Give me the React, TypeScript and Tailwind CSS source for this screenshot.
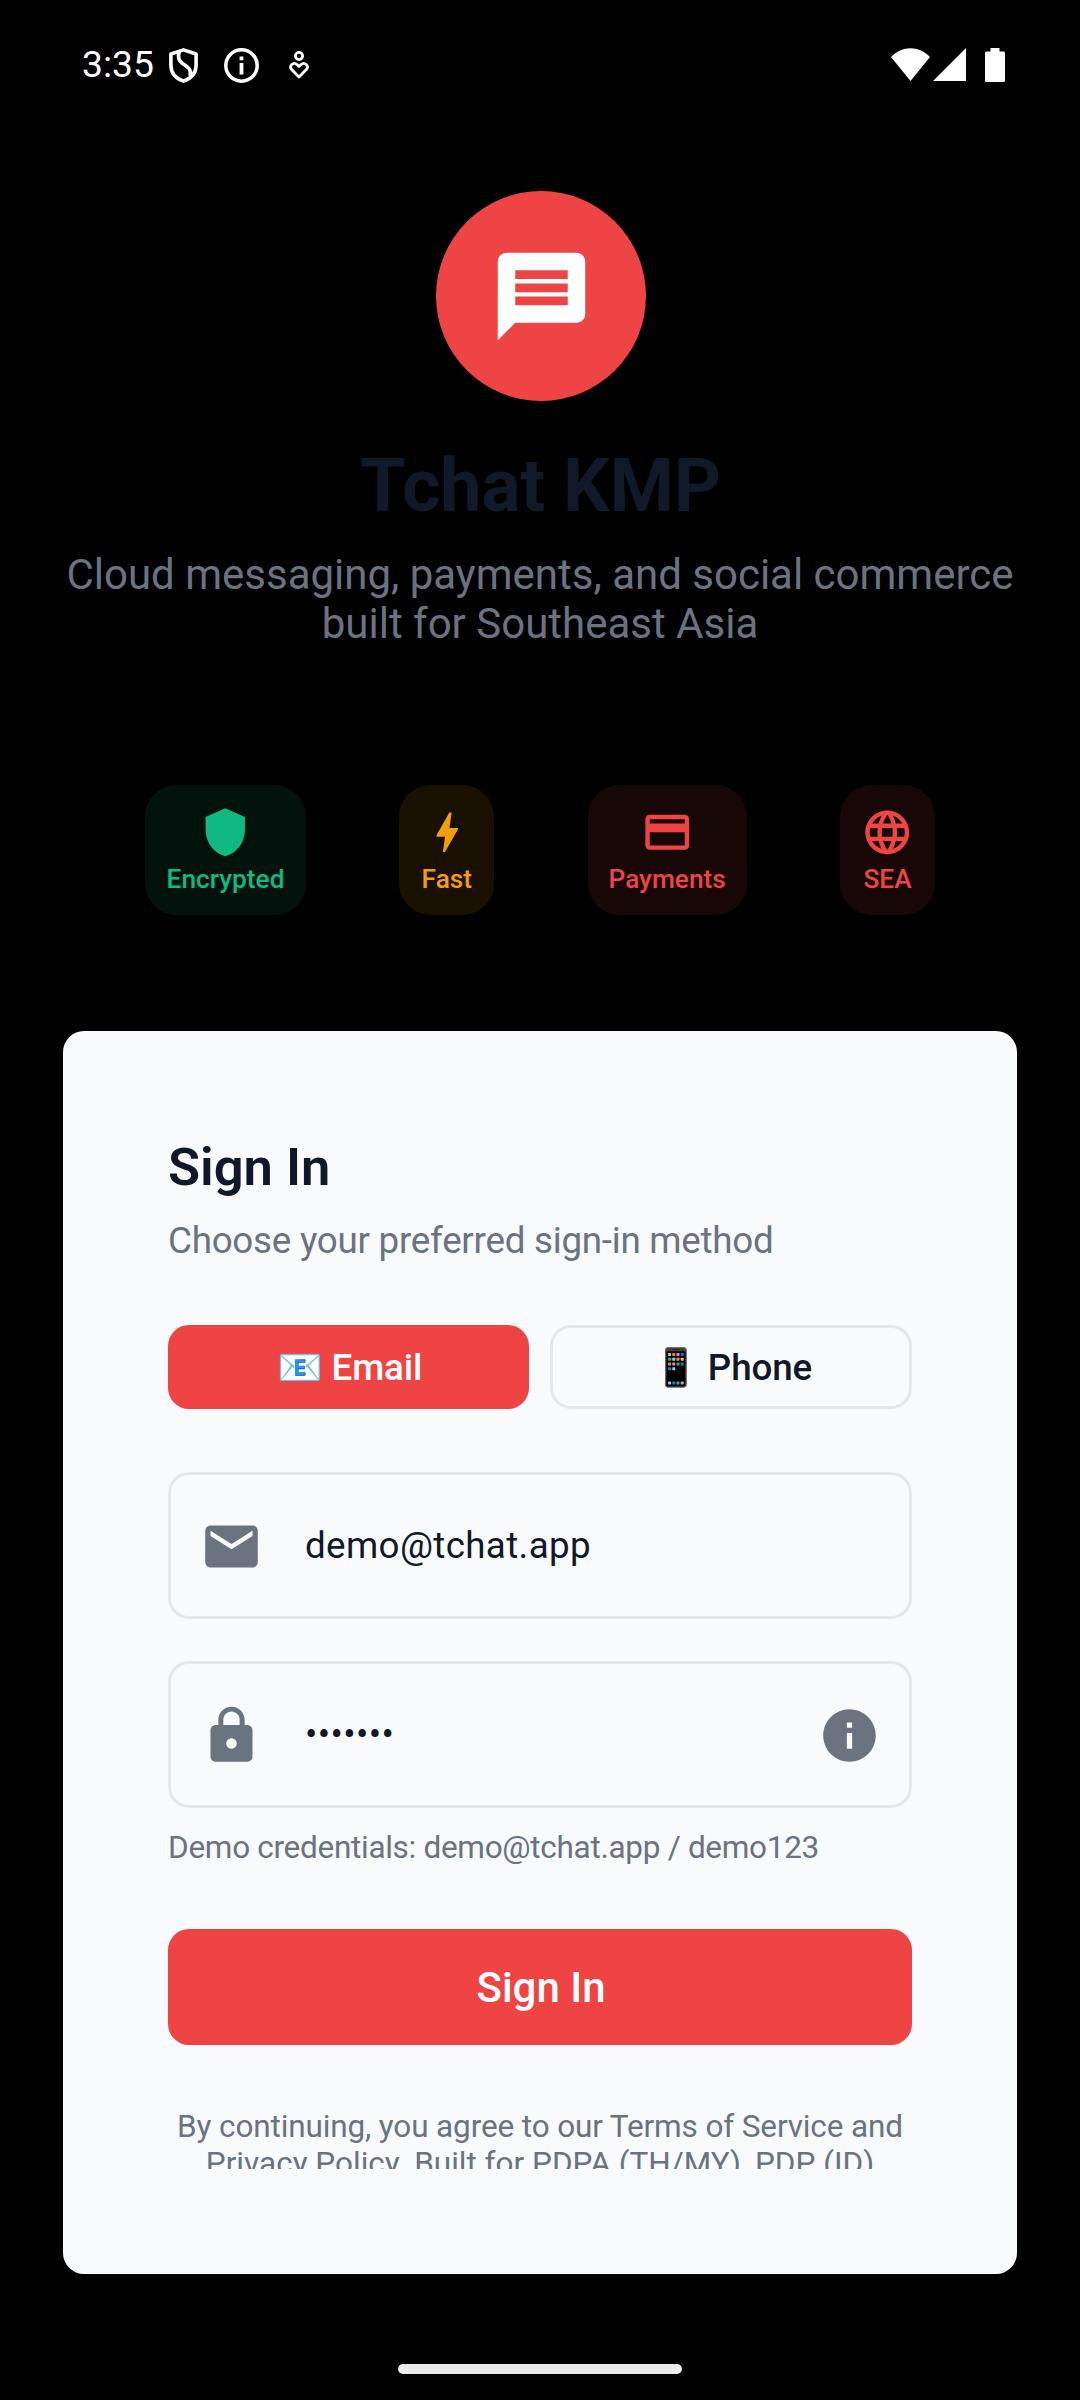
import type { ReactNode } from "react";

const ICONS = {
  message:
    "M20 2H4c-1.1 0-1.99.9-1.99 2L2 22l4-4h14c1.1 0 2-.9 2-2V4c0-1.1-.9-2-2-2zm-2 12H6v-2h12v2zm0-3H6V9h12v2zm0-3H6V6h12v2z",
  shield: "M12 1L3 5v6c0 5.55 3.84 10.74 9 12 5.16-1.26 9-6.45 9-12V5l-9-4z",
  bolt: "M11 21h-1l1-7H7.5c-.58 0-.57-.32-.38-.66.19-.34.05-.08.07-.12C8.48 10.94 10.42 7.54 13 3h1l-1 7h3.5c.49 0 .56.33.47.51l-.07.15C12.96 17.55 11 21 11 21z",
  card: "M20 4H4c-1.11 0-1.99.89-1.99 2L2 18c0 1.11.89 2 2 2h16c1.11 0 2-.89 2-2V6c0-1.11-.89-2-2-2zm0 14H4v-6h16v6zm0-10H4V6h16v2z",
  globe:
    "M11.99 2C6.47 2 2 6.48 2 12s4.47 10 9.99 10C17.52 22 22 17.52 22 12S17.52 2 11.99 2zm6.93 6h-2.95c-.32-1.25-.78-2.45-1.38-3.56 1.84.63 3.37 1.91 4.33 3.56zM12 4.04c.83 1.2 1.48 2.53 1.91 3.96h-3.82c.43-1.43 1.08-2.76 1.91-3.96zM4.26 14C4.1 13.36 4 12.69 4 12s.1-1.36.26-2h3.38c-.08.66-.14 1.32-.14 2 0 .68.06 1.34.14 2H4.26zm.82 2h2.95c.32 1.25.78 2.45 1.38 3.56-1.84-.63-3.37-1.9-4.33-3.56zm2.95-8H5.08c.96-1.66 2.49-2.93 4.33-3.56C8.81 5.55 8.35 6.75 8.03 8zM12 19.96c-.83-1.2-1.48-2.53-1.91-3.96h3.82c-.43 1.43-1.08 2.76-1.91 3.96zM14.34 14H9.66c-.09-.66-.16-1.32-.16-2 0-.68.07-1.35.16-2h4.68c.09.65.16 1.32.16 2 0 .68-.07 1.34-.16 2zm.25 5.56c.6-1.11 1.06-2.31 1.38-3.56h2.95c-.96 1.65-2.49 2.93-4.33 3.56zM16.36 14c.08-.66.14-1.32.14-2 0-.68-.06-1.34-.14-2h3.38c.16.64.26 1.31.26 2s-.1 1.36-.26 2h-3.38z",
  mail: "M20 4H4c-1.1 0-1.99.9-1.99 2L2 18c0 1.1.9 2 2 2h16c1.1 0 2-.9 2-2V6c0-1.1-.9-2-2-2zm0 4l-8 5-8-5V6l8 5 8-5v2z",
  lock: "M18 8h-1V6c0-2.76-2.24-5-5-5S7 3.24 7 6v2H6c-1.1 0-2 .9-2 2v10c0 1.1.9 2 2 2h12c1.1 0 2-.9 2-2V10c0-1.1-.9-2-2-2zm-6 9c-1.1 0-2-.9-2-2s.9-2 2-2 2 .9 2 2-.9 2-2 2zm3.1-9H8.9V6c0-1.71 1.39-3.1 3.1-3.1 1.71 0 3.1 1.39 3.1 3.1v2z",
  info: "M12 2C6.48 2 2 6.48 2 12s4.48 10 10 10 10-4.48 10-10S17.52 2 12 2zm1 15h-2v-6h2v6zm0-8h-2V7h2v2z",
};

function Icon({ name, className }: { name: keyof typeof ICONS; className: string }) {
  return (
    <svg viewBox="0 0 24 24" fill="currentColor" className={className}>
      <path d={ICONS[name]} />
    </svg>
  );
}

function StatusBar() {
  return (
    <header className="flex h-[130px] items-center justify-between pl-[82px] pr-[75px] text-white">
      <div className="flex items-center">
        <span className="mb-[2px] w-[87px] text-[37.25px] leading-[44px]">3:35</span>
        <svg viewBox="0 0 29 35" className="h-[35px] w-[29px]" fill="none" stroke="currentColor" strokeWidth="3.6">
          <path d="M14.5 1.9 L27.1 6 V17 C27.1 25 22 30.5 14.5 33.1 C7 30.5 1.9 25 1.9 17 V6 Z" strokeLinejoin="round" />
          <path d="M10.6 3 C8.6 8 9.4 12.5 13.5 15.5 C19.5 19.5 23 22 21 28" />
        </svg>
        <svg viewBox="0 0 35 35" className="ml-[26px] h-[35px] w-[35px]" fill="none" stroke="currentColor">
          <circle cx="17.5" cy="17.5" r="15.7" strokeWidth="3.5" />
          <path d="M17.5 15v11.5M17.5 8.6v3.6" strokeWidth="3.8" />
        </svg>
        <svg viewBox="0 0 20 28" className="ml-[30px] h-[28px] w-[20px]" fill="none" stroke="currentColor" strokeWidth="2.8">
          <circle cx="10" cy="5" r="3.6" />
          <path d="M10 26 L2.6 18.6 C-.4 14.8 4.4 10.4 8 13.6 L10 15.6 L12 13.6 C15.6 10.4 20.4 14.8 17.4 18.6 Z" strokeLinejoin="round" />
        </svg>
      </div>
      <div className="flex items-start">
        <svg viewBox="0 0 39 33" className="h-[33px] w-[39px]" fill="currentColor">
          <path d="M19.5 33 L0 9 C11 -2.6 28 -2.6 39 9 Z" />
        </svg>
        <svg viewBox="0 0 33 33" className="ml-[3px] h-[33px] w-[33px]" fill="currentColor">
          <path d="M33 0V33H0Z" />
        </svg>
        <svg viewBox="0 0 20 34" className="ml-[19px] h-[34px] w-[20px]" fill="currentColor">
          <path d="M5.5 0h9v3.5H18.4Q20 3.5 20 5.1V32.4Q20 34 18.4 34H1.6Q0 34 0 32.4V5.1Q0 3.5 1.6 3.5H5.5Z" />
        </svg>
      </div>
    </header>
  );
}

function Badge({ icon, label, className }: { icon: keyof typeof ICONS; label: string; className: string }) {
  return (
    <div className={`flex h-[130px] flex-col items-center rounded-[31.5px] pt-[21px] ${className}`}>
      <Icon name={icon} className="h-[52.5px] w-[52.5px]" />
      <span className="mt-[5.5px] text-[26.25px] leading-[31px] font-medium">{label}</span>
    </div>
  );
}

function Field({ icon, trailing, children }: { icon: keyof typeof ICONS; trailing?: ReactNode; children: ReactNode }) {
  return (
    <div className="flex h-[147px] items-center rounded-[21px] border-[3px] border-[#e5e7eb] px-[28.5px]">
      <Icon name={icon} className="mt-px h-[63px] w-[63px] text-[#6b7280]" />
      <span className="ml-[42.5px] flex-1 text-[36.75px] leading-[43px] tracking-[0.37px] text-[#111827]">{children}</span>
      {trailing}
    </div>
  );
}

export default function App() {
  return (
    <div className="flex h-[2400px] w-[1080px] flex-col overflow-hidden bg-black font-[Roboto,sans-serif]">
      <StatusBar />
      <main className="flex flex-col items-center pt-[61px]">
        <div className="ml-[2px] flex h-[210px] w-[210px] items-center justify-center rounded-full bg-[#ef4444]">
          <Icon name="message" className="h-[105px] w-[105px] text-white" />
        </div>
        <h1 className="mt-[42px] ml-[1px] text-[73.5px] leading-[86px] font-bold tracking-[-0.2px] text-[#111827]">
          Tchat KMP
        </h1>
        <p className="mt-[21px] text-center text-[42px] leading-[49px] whitespace-nowrap text-[#6b7280]">
          Cloud messaging, payments, and social commerce
          <br />
          built for Southeast Asia
        </p>

        <div className="mt-[137px] flex w-[790px] justify-between">
          <Badge icon="shield" label="Encrypted" className="w-[161px] bg-[#10b981]/10 text-[#10b981]" />
          <Badge icon="bolt" label="Fast" className="w-[95px] bg-[#f59e0b]/10 text-[#f59e0b]" />
          <Badge icon="card" label="Payments" className="w-[159px] bg-[#ef4444]/10 text-[#ef4444]" />
          <Badge icon="globe" label="SEA" className="w-[95px] bg-[#ef4444]/10 text-[#ef4444]" />
        </div>

        <section className="mt-[116px] h-[1243px] w-[954px] rounded-[21px] bg-[#f9fafc] p-[105px]">
          <div className="flex h-full flex-col overflow-hidden">
            <h2 className="shrink-0 text-[52.5px] leading-[62px] font-semibold text-[#111827]">Sign In</h2>
            <p className="mt-[21px] shrink-0 text-[36.75px] leading-[43px] tracking-[-0.25px] text-[#6b7280]">
              Choose your preferred sign-in method
            </p>

            <div className="mt-[63px] grid h-[84px] shrink-0 grid-cols-[361px_362px] gap-[21px] text-[36.75px] leading-[43px] font-medium tracking-[-0.1px]">
              <button className="flex items-center justify-center rounded-[21px] bg-[#ef4444] pl-[2px] whitespace-pre text-white">
                📧 Email
              </button>
              <button className="flex items-center justify-center rounded-[21px] border-[3px] border-[#e5e7eb] pl-[3px] whitespace-pre text-[#111827]">
                📱 Phone
              </button>
            </div>

            <div className="mt-[63px] flex shrink-0 flex-col gap-[42px]">
              <Field icon="mail">demo@tchat.app</Field>
              <Field icon="lock" trailing={<Icon name="info" className="mt-px h-[63px] w-[63px] text-[#6b7280]" />}>
                •••••••
              </Field>
            </div>
            <p className="mt-[21px] shrink-0 text-[31.5px] leading-[37px] tracking-[-0.29px] text-[#6b7280]">
              Demo credentials: demo@tchat.app / demo123
            </p>

            <button className="mt-[63px] h-[116px] shrink-0 rounded-[21px] bg-[#ef4444] pl-[2px] text-[42px] leading-[49px] font-medium text-white">
              Sign In
            </button>

            <p className="mt-[63px] shrink-0 text-center text-[31.5px] leading-[37px] whitespace-nowrap text-[#6b7280]">
              <span className="tracking-[-0.13px]">By continuing, you agree to our Terms of Service and</span>
              <br />
              Privacy Policy. Built for PDPA (TH/MY), PDP (ID)
            </p>
          </div>
        </section>
      </main>
      <div className="mx-auto mt-[90px] h-[10px] w-[284px] shrink-0 rounded-full bg-[#ebebeb]" />
    </div>
  );
}
